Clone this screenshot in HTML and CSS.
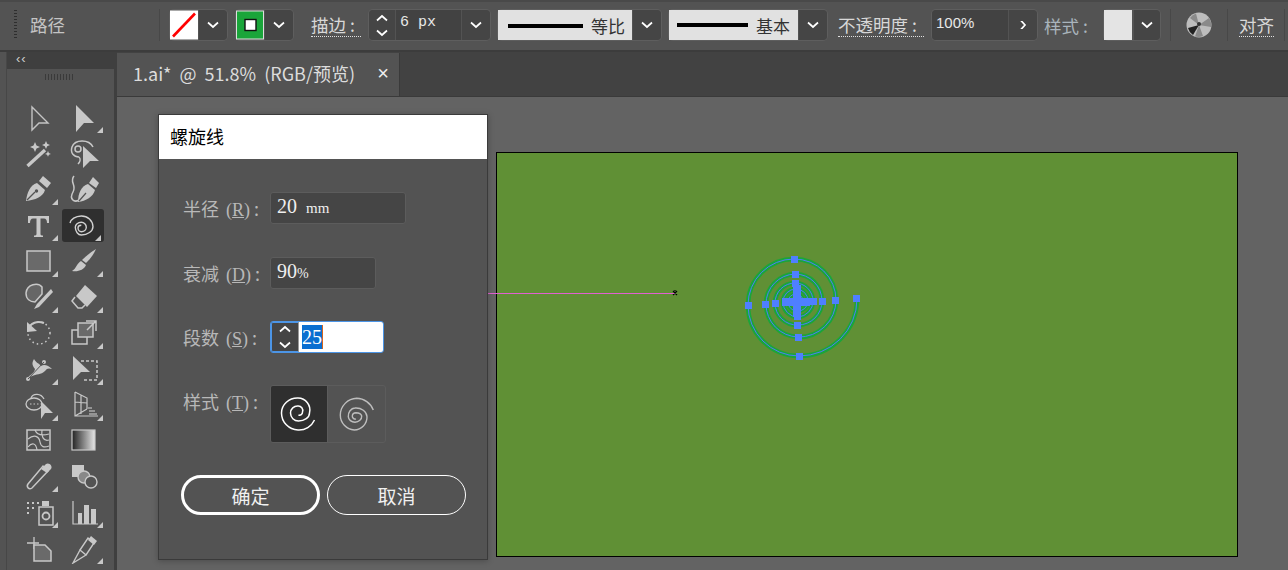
FILE: index.html
```html
<!DOCTYPE html>
<html lang="en">
<head>
    <meta charset="UTF-8">
    <meta name="viewport" content="width=device-width, initial-scale=1.0">
    <title>螺旋线</title>
    <link rel="stylesheet" href="styles.css">
</head>
<body>
    <svg class="defs" width="0" height="0">
        <symbol id="chev" viewBox="0 0 12 8"><path d="M1 1.5 L6 6 L11 1.5" fill="none" stroke="#fff" stroke-width="1.7"/></symbol>
    </svg>

    <div id="optionsbar">
        <div class="grip"></div>
        <div class="bar-title">路径</div>
        <div class="sep sep-first"></div>

        <div class="combo m-fill">
            <svg class="swatch" viewBox="0 0 28 29"><rect width="28" height="29" fill="#fff"/><path d="M3 26 L25 3" stroke="#f00" stroke-width="2.6"/></svg>
            <div class="drop"><svg class="chev"><use href="#chev"/></svg></div>
        </div>
        <div class="combo m-stroke">
            <svg class="swatch" viewBox="0 0 28 29"><rect width="28" height="29" fill="#dedede"/><rect x="1" y="1" width="26" height="27" fill="#1aa53a"/><rect x="9" y="9" width="11" height="11" fill="#fff" stroke="#111" stroke-width="1.4"/></svg>
            <div class="drop"><svg class="chev"><use href="#chev"/></svg></div>
        </div>

        <div class="link-label m-stroke-label">描边 :</div>
        <div class="combo">
            <div class="spin"><svg class="chev"><use href="#chev" transform="rotate(180 6 4)"/></svg><svg class="chev"><use href="#chev"/></svg></div>
            <div class="value v-weight">6 px</div>
            <div class="drop"><svg class="chev"><use href="#chev"/></svg></div>
        </div>

        <div class="combo m-profile">
            <div class="stroke-box sb-one"><span class="line"></span><span class="stroke-text">等比</span></div>
            <div class="drop"><svg class="chev"><use href="#chev"/></svg></div>
        </div>
        <div class="combo m-brush">
            <div class="stroke-box sb-two"><span class="line line-up"></span><span class="stroke-text">基本</span></div>
            <div class="drop"><svg class="chev"><use href="#chev"/></svg></div>
        </div>

        <div class="link-label m-opacity-label">不透明度 :</div>
        <div class="combo m-opacity">
            <div class="value v-opacity">100%</div>
            <div class="drop"><svg class="chev chev-right"><use href="#chev" transform="rotate(-90 6 4)"/></svg></div>
        </div>

        <div class="plain-label">样式 :</div>
        <div class="combo m-style">
            <div class="style-swatch"></div>
            <div class="drop"><svg class="chev"><use href="#chev"/></svg></div>
        </div>
        <div class="sep sep-style"></div>
        <svg class="recolor" viewBox="0 0 26 26">
            <circle cx="13" cy="13" r="12.5" fill="#bdbdbd"/>
            <path d="M13 13 L4 6 A12 12 0 0 1 10 1.5 Z M13 13 L23 6 A12 12 0 0 1 25 15 Z M13 13 L17 24 A12 12 0 0 1 9 24.5 Z" fill="#8a8a8a"/>
            <path d="M13 13 L2 16 A12 12 0 0 0 7 23 Z" fill="#222"/>
            <circle cx="13" cy="12" r="2" fill="#333"/>
        </svg>
        <div class="sep sep-align"></div>
        <div class="link-label m-align">对齐</div>
        <div class="sep sep-last"></div>
    </div>

    <div id="main">
        <div id="toolbar">
            <div class="tool-head">‹‹</div>
            <div class="tool-grip"></div>
            <div class="tools">
                <div class="tool"><svg viewBox="0 0 30 30"><path d="M8 4 L24 20 L15 20 L8 27 Z" fill="none" stroke="#c4c4c4" stroke-width="1.4"/></svg></div>
                <div class="tool more"><svg viewBox="0 0 30 30"><path d="M7 2 L25 20 L15 20 L7 29 Z" fill="#c8c8c8"/></svg></div>

                <div class="tool"><svg viewBox="0 0 30 30"><path d="M3.500 27 L21 11" stroke="#c8c8c8" stroke-width="3.400"/><path d="M11 3 l1.500 3.500 3.500 1.500 -3.500 1.500 -1.500 3.500 -1.500 -3.500 -3.500 -1.500 3.500 -1.500z M22 2 l1.200 2.800 2.800 1.200 -2.800 1.200 -1.200 2.800 -1.200 -2.800 -2.800 -1.200 2.800 -1.200z M24 12 l.9 2 2 .9 -2 .9 -.9 2 -.9 -2 -2 -.9 2 -.9z" fill="#c8c8c8"/></svg></div>
                <div class="tool"><svg viewBox="0 0 30 30"><path d="M24 8 C20 0 6 0 3 8 C1 14 5 18 10 18 M10 18 C12 20 11 23 9 25" fill="none" stroke="#c8c8c8" stroke-width="1.500"/><circle cx="9" cy="10" r="3" fill="none" stroke="#c8c8c8" stroke-width="1.500"/><path d="M14 7 L30 22 L21 22 L14 29 Z" fill="#c8c8c8"/></svg></div>

                <div class="tool more"><svg viewBox="0 0 30 30"><path d="M2 26 C3 18 6 10 13 8 L21 15 C19 22 11 25 2 26 Z" fill="#c8c8c8"/><path d="M15 6 L19 1 L27 8 L23 13 Z" fill="#c8c8c8"/><path d="M3 25 L11 17" stroke="#535353" stroke-width="1.200"/><circle cx="12.500" cy="16" r="1.700" fill="#535353"/></svg></div>
                <div class="tool"><svg viewBox="0 0 30 30"><path d="M5 1 C0 7 8 10 4 17 C0 24 5 28 10 25" fill="none" stroke="#c8c8c8" stroke-width="1.500"/><path d="M9 27 C9 19 12 11 19 9 L26 15 C24 22 17 26 9 27 Z" fill="#c8c8c8"/><path d="M20 8 L24 2 L30 8 L27 13 Z" fill="#c8c8c8"/><path d="M10 26 L17 18" stroke="#535353" stroke-width="1.200"/></svg></div>

                <div class="tool more"><svg viewBox="0 0 30 30"><path d="M4 5 H25 V12 H23 C23 9 22 7.500 20 7.500 H16.500 V23 C16.500 24.500 17.500 24.500 19 24.500 V26 H10 V24.500 C11.500 24.500 12.500 24.500 12.500 23 V7.500 H9 C7 7.500 6 9 6 12 H4 Z" fill="#c8c8c8"/></svg></div>
                <div class="tool more active"><svg viewBox="0 0 30 30"><path d="M2 12 A12 8 0 0 1 13.300 5 A11.500 11 0 0 1 25 15.700 A12 8.500 0 0 1 13.300 24 A6 8 0 0 1 7.300 16.300 A6 5 0 0 1 13.300 11.300 A5 5 0 0 1 18.300 16.300 A5 4.500 0 0 1 13.300 20.700 A3.300 4 0 0 1 10 16.700 A3.300 2.500 0 0 1 13.300 14.300" fill="none" stroke="#d2d2d2" stroke-width="1.400"/></svg></div>

                <div class="tool more"><svg viewBox="0 0 30 30"><rect x="3" y="4" width="23" height="20" fill="#6a6a6a" stroke="#c8c8c8" stroke-width="1.500"/></svg></div>
                <div class="tool more"><svg viewBox="0 0 30 30"><path d="M27 2 C24 9 20 13 17 16 L13 13 C17 9 22 5 27 2 Z" fill="#c8c8c8"/><path d="M12 14 L17 18 C15 23 9 25 3 24 C7 22 8 16 12 14 Z" fill="#c8c8c8"/></svg></div>

                <div class="tool more"><svg viewBox="0 0 30 30"><path d="M18 5 C14 0 3 2 2 11 C2 17 6 20 11 20 L18 12 Z" fill="#666" stroke="#c8c8c8" stroke-width="1.500"/><path d="M27 7 L13 22 L10 27 L15 25 L29 10 Z" fill="#c8c8c8"/></svg></div>
                <div class="tool more"><svg viewBox="0 0 30 30"><path d="M16 3 L28 14 L18 25 L7 14 Z" fill="#c8c8c8"/><path d="M6 15 L3 19 L9 26 L13 26 L16 23" fill="none" stroke="#c8c8c8" stroke-width="1.500"/></svg></div>

                <div class="tool more"><svg viewBox="0 0 30 30"><path d="M4 12 C6 4 14 3 20 5" fill="none" stroke="#c8c8c8" stroke-width="2"/><path d="M3 4 L3 14 L13 13 Z" fill="#c8c8c8"/><circle cx="15" cy="15" r="11" fill="none" stroke="#c8c8c8" stroke-width="1.500" stroke-dasharray="1.500 3"/></svg></div>
                <div class="tool more"><svg viewBox="0 0 30 30"><rect x="3" y="12" width="15" height="14" fill="none" stroke="#c8c8c8" stroke-width="1.500"/><rect x="9" y="5" width="15" height="14" fill="#6a6a6a" stroke="#c8c8c8" stroke-width="1.500"/><path d="M17 3 H27 V13 M27 3 L18 12" fill="none" stroke="#c8c8c8" stroke-width="1.500"/></svg></div>

                <div class="tool more"><svg viewBox="0 0 30 30"><path d="M3 25 C6 20 10 20 11 15 C9 12 7 10 10 5 C12 9 15 9 17 12 C20 10 24 11 28 15 C25 14 23 14 21 17 C17 21 12 20 8 22 Z" fill="#c8c8c8"/><circle cx="4" cy="25" r="2" fill="#c8c8c8"/><circle cx="20" cy="8" r="2" fill="#c8c8c8"/><path d="M4 25 L20 8" stroke="#535353" stroke-width="1"/></svg></div>
                <div class="tool more"><svg viewBox="0 0 30 30"><path d="M12 7 H28 V26 H13" fill="none" stroke="#c8c8c8" stroke-width="1.500" stroke-dasharray="3 2"/><path d="M4 2 L21 18 L12 18 L4 26 Z" fill="#c8c8c8"/></svg></div>

                <div class="tool more"><svg viewBox="0 0 30 30"><ellipse cx="10" cy="14" rx="8" ry="6" fill="none" stroke="#c8c8c8" stroke-width="1.300"/><path d="M20 9 C17 3 9 3 7 8" fill="none" stroke="#c8c8c8" stroke-width="1.300"/><path d="M6 14 H18" stroke="#c8c8c8" stroke-dasharray="1.500 2"/><path d="M17 11 L29 23 L21 23 L17 29 Z" fill="#c8c8c8"/></svg></div>
                <div class="tool more"><svg viewBox="0 0 30 30"><path d="M6 2 L6 26 H29 M6 2 L18 8 V19 M6 12 L18 13 M12 5 V24 M6 26 L18 19" fill="none" stroke="#c8c8c8" stroke-width="1.200"/><path d="M19 18 H23 M20 21 H26 M20 24 H28" stroke="#aaa" stroke-width="1.400"/></svg></div>

                <div class="tool"><svg viewBox="0 0 30 30"><rect x="3" y="4" width="23" height="20" fill="none" stroke="#c8c8c8" stroke-width="1.500"/><path d="M4 13 C10 8 15 10 16 16 C17 21 20 22 25 20 M4 21 C8 16 12 17 13 24 M11 4 C13 9 18 10 25 8 M18 4 C17 9 19 16 25 14" fill="none" stroke="#c8c8c8" stroke-width="1.200"/></svg></div>
                <div class="tool"><svg viewBox="0 0 30 30"><defs><linearGradient id="grad"><stop offset="0" stop-color="#222"/><stop offset="1" stop-color="#e6e6e6"/></linearGradient></defs><rect x="3" y="4" width="23" height="20" fill="url(#grad)" stroke="#c8c8c8" stroke-width="1.200"/></svg></div>

                <div class="tool more"><svg viewBox="0 0 30 30"><path d="M19 4 L24 9 L8 26 C5 28 2 25 4 22 Z" fill="none" stroke="#c8c8c8" stroke-width="1.500"/><path d="M17 7 L22 2 C25 0 29 4 27 7 L23 11 Z" fill="#c8c8c8"/></svg></div>
                <div class="tool"><svg viewBox="0 0 30 30"><rect x="3" y="3" width="12" height="12" fill="#c8c8c8"/><circle cx="15" cy="15" r="6" fill="#888" stroke="#c8c8c8" stroke-width="1.400"/><circle cx="22" cy="20" r="6" fill="#535353" stroke="#c8c8c8" stroke-width="1.400"/></svg></div>

                <div class="tool more"><svg viewBox="0 0 30 30"><path d="M3 4 h2 v2 h-2z M8 4 h2 v2 h-2z M13 4 h2 v2 h-2z M3 9 h2 v2 h-2z M8 9 h2 v2 h-2z M3 14 h2 v2 h-2z" fill="#c8c8c8"/><rect x="15" y="9" width="14" height="18" fill="none" stroke="#c8c8c8" stroke-width="1.500"/><rect x="18" y="3" width="7" height="5" fill="#c8c8c8"/><circle cx="22" cy="18" r="3.500" fill="none" stroke="#c8c8c8" stroke-width="1.800"/></svg></div>
                <div class="tool more"><svg viewBox="0 0 30 30"><path d="M4 3 V26 H29" fill="none" stroke="#c8c8c8" stroke-width="1.200"/><path d="M9 15 h4 v11 h-4z M15 7 h5 v19 h-5z M22 11 h5 v15 h-5z" fill="#c8c8c8"/></svg></div>

                <div class="tool"><svg viewBox="0 0 30 30"><path d="M3 9 H15 M10 3 V15" stroke="#c8c8c8" stroke-width="1.300"/><path d="M10 11 H21 L27 17 V27 H10 Z" fill="#6a6a6a" stroke="#c8c8c8" stroke-width="1.500"/></svg></div>
                <div class="tool more"><svg viewBox="0 0 30 30"><path d="M4 29 L11 16 L17 21 Z" fill="none" stroke="#c8c8c8" stroke-width="1.400"/><path d="M11 16 L19 4 L25 9 L17 21" fill="none" stroke="#c8c8c8" stroke-width="1.400"/><path d="M19 6 L22 2 L28 7 L25 11 Z" fill="#c8c8c8"/></svg></div>
            </div>
        </div>

        <div id="workspace">
            <div class="tabs">
                <div class="tab"><span>1.ai* @ 51.8% (RGB/预览)</span><span class="tab-x">×</span></div>
            </div>
            <div class="canvas">
                <div class="artboard"></div>
                <svg class="overlay" viewBox="117 97 1171 473">
                    <path d="M488 293.500 H675" stroke="#e060d0" stroke-width="1"/>
                    <path d="M673 291 l4 4 M677 291 l-4 4 M675 290 v1" stroke="#000" stroke-width="1.200"/>
                    <g fill="none">
                        <path stroke="#1aa53a" stroke-width="4.500" d="M857 299 A58 57 0 0 1 799 356 A51 51 0 0 1 748 305 A46 46 0 0 1 794 259 A42 41 0 0 1 836 300 A37 37 0 0 1 798 337 A33 33 0 0 1 766 304 A30 30 0 0 1 795 274 A27 27 0 0 1 822 301 A24 24 0 0 1 798 325 A22 22 0 0 1 775 303 A20 20 0 0 1 795 283 A18 18 0 0 1 813 301 A16 16 0 0 1 798 317 A15 15 0 0 1 783 302 A13 13 0 0 1 796 289 A12 12 0 0 1 808 301 A10 10 0 0 1 797 311 A9 9 0 0 1 788 302 A8 8 0 0 1 796 294 A7 7 0 0 1 803 301 A5 5 0 0 1 797 306"/>
                        <path stroke="#4d7ef5" stroke-width="1" d="M857 299 A58 57 0 0 1 799 356 A51 51 0 0 1 748 305 A46 46 0 0 1 794 259 A42 41 0 0 1 836 300 A37 37 0 0 1 798 337 A33 33 0 0 1 766 304 A30 30 0 0 1 795 274 A27 27 0 0 1 822 301 A24 24 0 0 1 798 325 A22 22 0 0 1 775 303 A20 20 0 0 1 795 283 A18 18 0 0 1 813 301 A16 16 0 0 1 798 317 A15 15 0 0 1 783 302 A13 13 0 0 1 796 289 A12 12 0 0 1 808 301 A10 10 0 0 1 797 311 A9 9 0 0 1 788 302 A8 8 0 0 1 796 294 A7 7 0 0 1 803 301 A5 5 0 0 1 797 306"/>
                    </g>
                    <g fill="#4f7fff">
                        <rect x="853" y="295" width="7" height="7"/><rect x="796" y="353" width="7" height="7"/><rect x="745" y="302" width="7" height="7"/><rect x="791" y="256" width="7" height="7"/>
                        <rect x="832" y="297" width="7" height="7"/><rect x="795" y="334" width="7" height="7"/><rect x="762" y="301" width="7" height="7"/><rect x="792" y="271" width="7" height="7"/>
                        <rect x="819" y="298" width="7" height="7"/><rect x="794" y="322" width="7" height="7"/><rect x="772" y="300" width="7" height="7"/><rect x="792" y="280" width="7" height="7"/>
                        <rect x="810" y="298" width="7" height="7"/><rect x="794" y="313" width="7" height="7"/><rect x="782" y="298" width="28" height="8"/><rect x="793" y="285" width="8" height="32"/>
                    </g>
                </svg>

                <div class="dialog">
                    <div class="dialog-title">螺旋线</div>
                    <div class="dialog-body">
                        <div class="row row-first">
                            <div class="field-label">半径 <span class="key">(<u>R</u>)</span> :</div>
                            <div class="field f-radius">20 <span class="unit unit-mm">mm</span></div>
                        </div>
                        <div class="row">
                            <div class="field-label">衰减 <span class="key">(<u>D</u>)</span> :</div>
                            <div class="field f-decay">90<span class="unit">%</span></div>
                        </div>
                        <div class="row">
                            <div class="field-label">段数 <span class="key">(<u>S</u>)</span> :</div>
                            <div class="field f-segments">
                                <div class="seg-spin"><svg class="chev"><use href="#chev" transform="rotate(180 6 4)"/></svg><svg class="chev"><use href="#chev"/></svg></div>
                                <div class="seg-input"><span class="selected">25</span></div>
                            </div>
                        </div>
                        <div class="row row-style">
                            <div class="field-label">样式 <span class="key">(<u>T</u>)</span> :</div>
                            <div class="style-pick">
                                <div class="pick pick-on"><svg viewBox="0 0 40 40"><path d="M35.500 26 A17 17 0 0 1 19 36 A17 17 0 0 1 2.500 19 A16 15 0 0 1 19 4 A12 12 0 0 1 30.500 19 A11 8 0 0 1 19.500 27 A8 8 0 0 1 11.500 19 A7 7 0 0 1 19 12 A4.500 4.500 0 0 1 23.500 18 A3 3 0 0 1 19.500 21" fill="none" stroke="#fff" stroke-width="1.500"/></svg></div>
                                <div class="pick"><svg viewBox="0 0 40 40"><path d="M36.300 16 A18 18 0 0 0 19.700 4.300 A17 17 0 0 0 3.300 21 A15 15 0 0 0 17.300 36 A13 13 0 0 0 30 22.700 A11 9 0 0 0 18 14 A7 8 0 0 0 11.300 22.700 A7 6 0 0 0 18 28.300 A7 6 0 0 0 24.700 22 A6 4 0 0 0 19 18.700 A4 3.500 0 0 0 15.300 22 A3 3 0 0 0 19 25" fill="none" stroke="#bdbdbd" stroke-width="1.400"/></svg></div>
                            </div>
                        </div>
                        <div class="buttons">
                            <button class="btn btn-ok">确定</button>
                            <button class="btn">取消</button>
                        </div>
                    </div>
                </div>
            </div>
        </div>
    </div>
</body>
</html>
```

FILE: styles.css
```css
* {
    box-sizing: border-box;
}

html,
body {
    margin: 0;
    height: 570px;
    overflow: hidden;
}

body {
    width: 1288px;
    background-color: #535353;
    color: #c4c4c4;
    font-family: "Noto Sans CJK SC", "Liberation Sans", sans-serif;
    display: flex;
    flex-direction: column;
}

.defs {
    position: absolute;
}

.chev {
    width: 12px;
    height: 8px;
    display: block;
}

/* top options bar */
#optionsbar {
    height: 52px;
    flex: none;
    display: flex;
    align-items: center;
    padding: 0 0 2px 14px;
    border-top: 2px solid #494949;
    border-bottom: 2px solid #3c3c3c;
    background-color: #535353;
    font-size: 17.5px;
    white-space: nowrap;
}

.grip {
    width: 3px;
    height: 28px;
    margin-bottom: 2px;
    background: repeating-linear-gradient(#2e2e2e 0 1px, transparent 1px 3px);
}

.bar-title {
    margin-left: 13px;
    width: 36px;
    line-height: 20px;
}

.sep {
    width: 1px;
    height: 32px;
    background-color: #484848;
}

.sep-first {
    margin-left: 93px;
}

.combo {
    height: 30px;
    display: flex;
    align-items: stretch;
    border-radius: 4px;
    box-shadow: 0 0 0 1px #5e5e5e;
}

.m-fill {
    margin-left: 10px;
}

.m-stroke {
    margin-left: 9px;
}

.swatch {
    width: 28px;
    height: 30px;
    display: block;
}

.drop {
    width: 28px;
    margin-left: 1px;
    display: flex;
    align-items: center;
    justify-content: center;
    background-color: #454545;
    border-radius: 0 4px 4px 0;
}

.link-label {
    line-height: 22px;
    border-bottom: 1px dotted #e0e0e0;
    color: #d8d8d8;
}

.m-stroke-label {
    margin-left: 18px;
    margin-right: 8px;
    width: 50px;
}

.spin {
    width: 26px;
    display: flex;
    flex-direction: column;
    align-items: center;
    justify-content: center;
    gap: 7px;
    background-color: #454545;
    border-radius: 4px 0 0 4px;
}

.value {
    margin-left: 1px;
    padding-left: 4px;
    background-color: #424242;
    color: #e8e8e8;
    font-family: "Liberation Mono", monospace;
    font-size: 15px;
    line-height: 25px;
}

.v-weight {
    width: 65px;
}

.m-profile {
    margin-left: 8px;
}

.m-brush {
    margin-left: 8px;
}

.stroke-box {
    display: flex;
    align-items: center;
    background-color: #e1e1e1;
    color: #333;
    padding-left: 10px;
}

.sb-one {
    width: 134px;
}

.sb-two {
    width: 129px;
    padding-left: 8px;
}

.line {
    width: 75px;
    height: 4px;
    background-color: #000;
    margin-top: 2px;
}

.line-up {
    width: 71px;
    margin-top: -1px;
}

.stroke-text {
    margin-left: 8px;
    font-size: 17px;
}

.m-opacity-label {
    margin-left: 11px;
    width: 86px;
}

.m-opacity {
    margin-left: 8px;
}

.v-opacity {
    margin-left: 0;
    width: 76px;
    border-radius: 4px 0 0 4px;
    font-family: "Liberation Sans", sans-serif;
    font-size: 15px;
    line-height: 25px;
}

.plain-label {
    margin-left: 7px;
    width: 60px;
    color: #a9b4bc;
}

.style-swatch {
    width: 28px;
    background-color: #e4e4e4;
}

.m-style .drop {
    margin-left: 2px;
    width: 26px;
}

.sep-style {
    margin-left: 10px;
}

.recolor {
    width: 26px;
    height: 26px;
    margin-left: 15px;
}

.sep-align {
    margin-left: 15px;
}

.m-align {
    margin-left: 11px;
    width: 35px;
}

.sep-last {
    margin-left: 10px;
}

/* left tool panel */
#main {
    flex: 1;
    display: flex;
    min-height: 0;
}

#toolbar {
    width: 111px;
    flex: none;
    margin-left: 6px;
    border-left: 1px solid #474747;
    border-right: 3px solid #3f3f3f;
    background-color: #535353;
}

.tool-head {
    height: 17px;
    background-color: #3f3f3f;
    color: #d0d0d0;
    font-family: "Liberation Sans", sans-serif;
    font-size: 13px;
    line-height: 14px;
    padding-left: 9px;
    letter-spacing: 1px;
}

.tool-grip {
    width: 28px;
    height: 6px;
    margin: 5px auto 0 38px;
    background: repeating-linear-gradient(90deg, #3a3a3a 0 1px, transparent 1px 3px);
}

.tools {
    display: grid;
    grid-template-columns: 45px 45px;
    grid-auto-rows: 35.900px;
    padding: 20px 0 0 9px;
    align-items: center;
}

.tool {
    position: relative;
    height: 33px;
    display: flex;
    align-items: center;
    justify-content: center;
    border-radius: 3px;
}

.tool svg {
    width: 30px;
    height: 30px;
    display: block;
}

.tool.more::after {
    content: "";
    position: absolute;
    right: 3px;
    bottom: 1px;
    border-style: solid;
    border-width: 0 0 6px 6px;
    border-color: transparent transparent #c8c8c8 transparent;
}

.tool.active {
    background-color: #2f2f2f;
    width: 42px;
    margin-left: 1px;
}

/* document area */
#workspace {
    flex: 1;
    display: flex;
    flex-direction: column;
    min-width: 0;
}

.tabs {
    height: 45px;
    flex: none;
    background-color: #424242;
    padding-top: 1px;
    border-bottom: 1px solid #3a3a3a;
}

.tab {
    width: 283px;
    height: 43px;
    display: flex;
    align-items: center;
    justify-content: space-between;
    padding: 0 10px 3px 16px;
    background-color: #535353;
    border-right: 1px solid #3a3a3a;
    color: #dcdcdc;
    font-size: 18px;
    word-spacing: 4px;
}

.tab-x {
    font-family: "Liberation Sans", sans-serif;
    font-size: 20px;
    color: #eee;
}

.canvas {
    flex: 1;
    position: relative;
    background-color: #636363;
}

.artboard {
    position: absolute;
    left: 379px;
    top: 55px;
    width: 742px;
    height: 405px;
    background-color: #609035;
    border: 1px solid #000;
}

.overlay {
    position: absolute;
    left: 0;
    top: 0;
    width: 1171px;
    height: 473px;
}

/* spiral dialog */
.dialog {
    position: absolute;
    left: 41px;
    top: 17px;
    width: 330px;
    height: 446px;
    background-color: #535353;
    border: 1px solid #3a3a3a;
    box-shadow: 0 1px 6px rgba(0, 0, 0, 0.25);
}

.dialog-title {
    height: 44px;
    padding-left: 11px;
    background-color: #fff;
    color: #000;
    font-size: 18px;
    line-height: 42px;
}

.dialog-body {
    display: flex;
    flex-direction: column;
    gap: 32px;
    padding: 33px 0 0 24px;
}

.row {
    display: flex;
    height: 32px;
}

.row-first {
    margin-bottom: 1px;
}

.row-style {
    height: 58px;
}

.field-label {
    width: 87px;
    font-size: 18px;
    line-height: 32px;
    color: #b8b8b8;
    white-space: nowrap;
}

.key {
    font-family: "Liberation Serif", serif;
    margin-left: 3px;
}

.field {
    height: 32px;
    background-color: #454545;
    border: 1px solid #5c5c5c;
    border-radius: 3px;
    padding-left: 6px;
    color: #efefef;
    font-family: "Liberation Serif", serif;
    font-size: 20px;
    line-height: 26px;
}

.unit {
    font-size: 14px;
}

.unit-mm {
    font-size: 15px;
    margin-left: 4px;
}

.f-radius {
    width: 136px;
}

.f-decay {
    width: 106px;
}

.f-segments {
    width: 114px;
    padding: 0;
    display: flex;
    overflow: hidden;
    border: 1px solid #4c95e6;
    box-shadow: 0 0 0 1px #4c95e6 inset;
}

.seg-spin {
    width: 28px;
    display: flex;
    flex-direction: column;
    align-items: center;
    justify-content: center;
    gap: 8px;
    border-right: 1px solid #9a9a9a;
}

.seg-input {
    flex: 1;
    background-color: #fff;
    padding: 2px 0 0 3px;
}

.selected {
    display: inline-block;
    height: 24px;
    line-height: 24px;
    background-color: #0a6fd0;
    border-right: 1px solid #d8641c;
    color: #fff;
}

.style-pick {
    display: flex;
    width: 116px;
    height: 58px;
    border: 1px solid #5c5c5c;
    border-radius: 3px;
    overflow: hidden;
}

.pick {
    width: 57px;
    display: flex;
    align-items: center;
    justify-content: center;
}

.pick svg {
    width: 40px;
    height: 40px;
}

.pick-on {
    background-color: #2f2f2f;
    border-right: 1px solid #5c5c5c;
}

.buttons {
    display: flex;
    gap: 7px;
    margin-left: -2px;
}

.btn {
    width: 139px;
    height: 40px;
    background: transparent;
    border: 1.500px solid #fff;
    border-radius: 20px;
    color: #f0f0f0;
    font-family: inherit;
    font-size: 19px;
    padding: 0;
}

.btn-ok {
    border-width: 3px;
}
```
